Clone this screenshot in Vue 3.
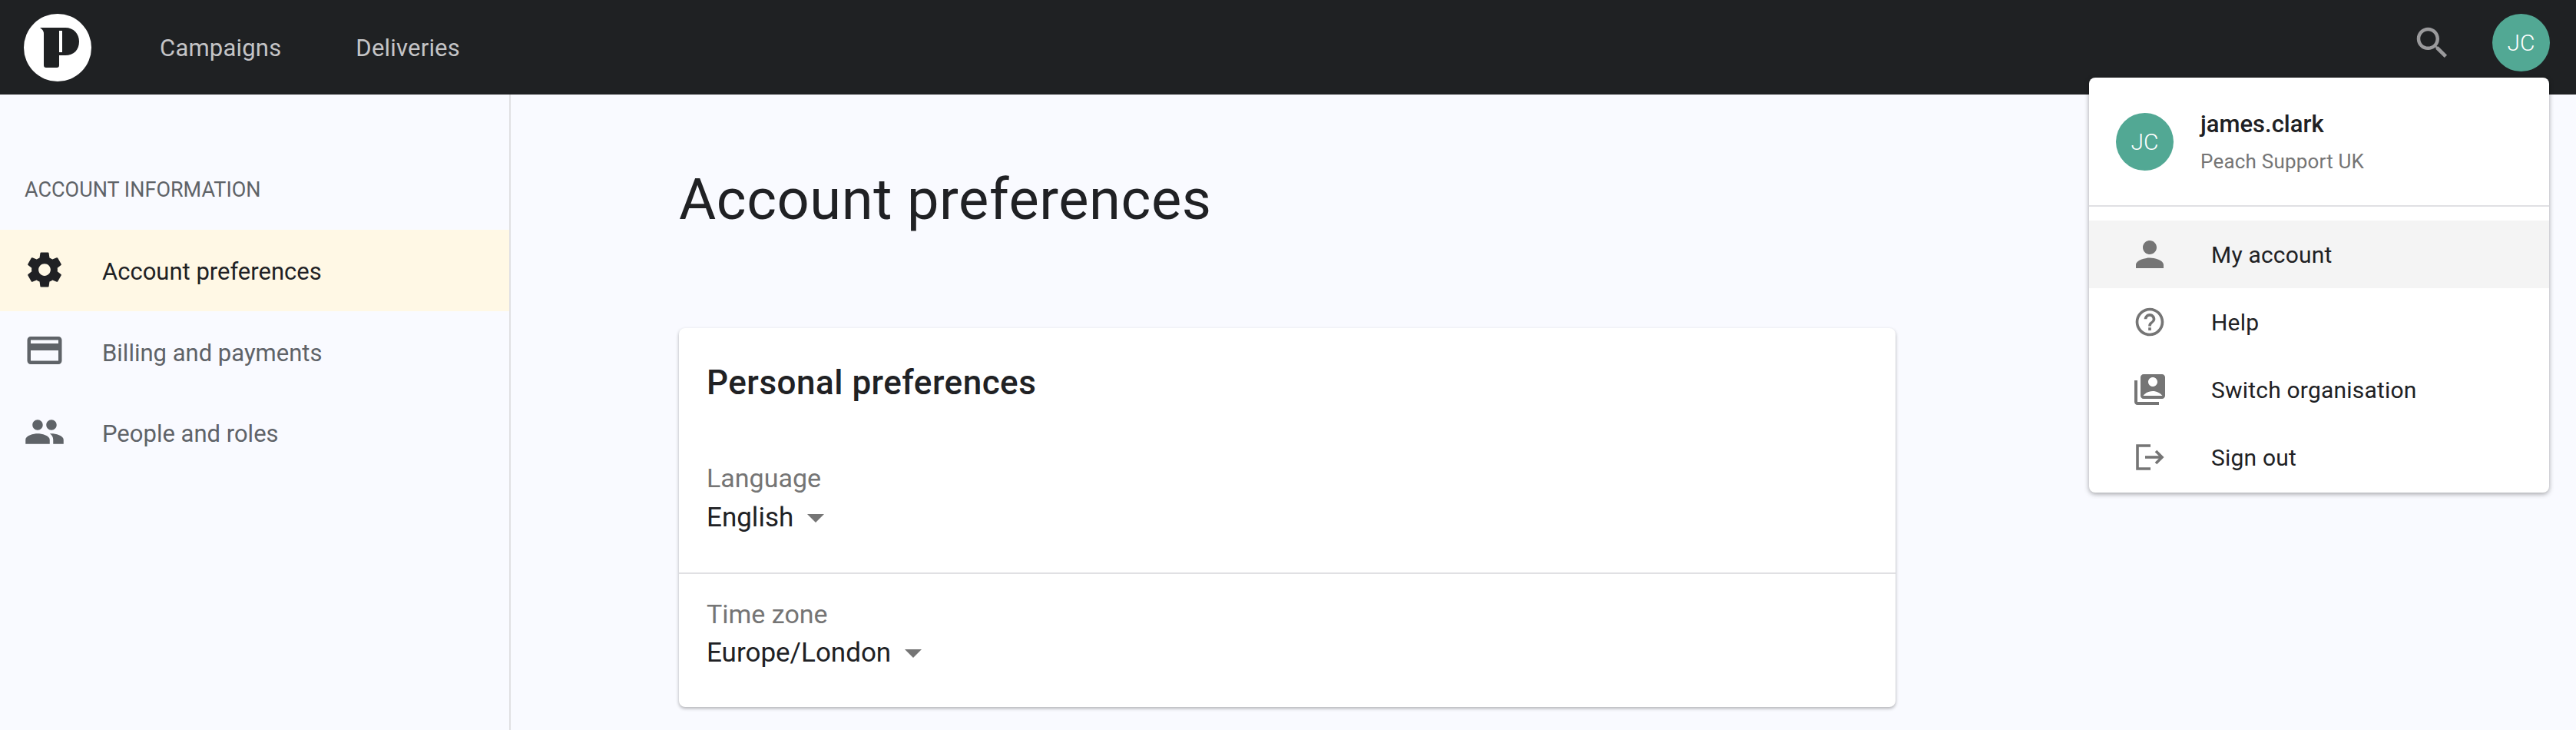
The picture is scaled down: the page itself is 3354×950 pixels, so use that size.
<script setup>
const nav = ['Campaigns', 'Deliveries']
const side = [
  { label: 'Account preferences', active: true, d: 'M19.43 12.98c.04-.32.07-.64.07-.98s-.03-.66-.07-.98l2.11-1.65c.19-.15.24-.42.12-.64l-2-3.46c-.12-.22-.39-.3-.61-.22l-2.49 1c-.52-.4-1.08-.73-1.69-.98l-.38-2.65C14.46 2.18 14.25 2 14 2h-4c-.25 0-.46.18-.49.42l-.38 2.65c-.61.25-1.17.59-1.69.98l-2.49-1c-.23-.09-.49 0-.61.22l-2 3.46c-.13.22-.07.49.12.64l2.11 1.65c-.04.32-.07.65-.07.98s.03.66.07.98l-2.11 1.65c-.19.15-.24.42-.12.64l2 3.46c.12.22.39.3.61.22l2.49-1c.52.4 1.08.73 1.69.98l.38 2.65c.03.24.24.42.49.42h4c.25 0 .46-.18.49-.42l.38-2.65c.61-.25 1.17-.59 1.69-.98l2.49 1c.23.09.49 0 .61-.22l2-3.46c.12-.22.07-.49-.12-.64l-2.11-1.65zM12 15.5c-1.93 0-3.5-1.57-3.5-3.5s1.57-3.5 3.5-3.5 3.5 1.57 3.5 3.5-1.57 3.5-3.5 3.5z' },
  { label: 'Billing and payments', d: 'M20 4H4c-1.11 0-1.99.89-1.99 2L2 18c0 1.11.89 2 2 2h16c1.11 0 2-.89 2-2V6c0-1.11-.89-2-2-2zm0 14H4v-6h16v6zm0-10H4V6h16v2z' },
  { label: 'People and roles', d: 'M16 11c1.66 0 2.99-1.34 2.99-3S17.66 5 16 5c-1.66 0-3 1.34-3 3s1.34 3 3 3zm-8 0c1.66 0 2.99-1.34 2.99-3S9.66 5 8 5C6.34 5 5 6.34 5 8s1.34 3 3 3zm0 2c-2.33 0-7 1.17-7 3.5V19h14v-2.5c0-2.33-4.67-3.5-7-3.5zm8 0c-.29 0-.62.02-.97.05 1.16.84 1.97 1.97 1.97 3.45V19h6v-2.5c0-2.33-4.67-3.5-7-3.5z' }
]
const fields = [
  { label: 'Language', value: 'English' },
  { label: 'Time zone', value: 'Europe/London' }
]
const menu = [
  { label: 'My account', hover: true, size: 54, d: 'M12 12c2.21 0 4-1.79 4-4s-1.79-4-4-4-4 1.79-4 4 1.79 4 4 4zm0 2c-2.67 0-8 1.34-8 4v2h16v-2c0-2.66-5.33-4-8-4z' },
  { label: 'Help', size: 44, d: 'M11 18h2v-2h-2v2zm1-16C6.48 2 2 6.48 2 12s4.48 10 10 10 10-4.48 10-10S17.52 2 12 2zm0 18c-4.41 0-8-3.59-8-8s3.59-8 8-8 8 3.59 8 8-3.59 8-8 8zm0-14c-2.21 0-4 1.79-4 4h2c0-1.1.9-2 2-2s2 .9 2 2c0 2-3 1.75-3 5h2c0-2.25 3-2.5 3-5 0-2.21-1.79-4-4-4z' },
  { label: 'Switch organisation', size: 48, d: 'M4 6H2v14c0 1.1.9 2 2 2h14v-2H4V6zm16-4H8c-1.1 0-2 .9-2 2v12c0 1.1.9 2 2 2h12c1.1 0 2-.9 2-2V4c0-1.1-.9-2-2-2zm-6 2c1.66 0 3 1.34 3 3s-1.34 3-3 3-3-1.34-3-3 1.34-3 3-3zM7.76 16c1.47-1.83 3.71-3 6.24-3s4.77 1.17 6.24 3H7.76z' },
  { label: 'Sign out', signout: true }
]
</script>

<template>
  <div class="page">
    <header class="topbar">
      <svg class="logo" viewBox="0 0 88 88" aria-label="Peach logo">
        <circle cx="44" cy="44" r="44" fill="#fff" />
        <path d="M21 18H54C65 18 72 26 72 36C72 47 65 54 54 54H46V67Q46 70 43 70H29Q26 70 26 67V26Q26 21 21 18Z" fill="#1f2123" />
        <rect x="46" y="22" width="4" height="28" fill="#fff" />
      </svg>
      <nav class="nav">
        <a v-for="n in nav" :key="n" class="nav-link">{{ n }}</a>
      </nav>
      <svg class="search" viewBox="0 0 24 24">
        <path fill="#9a9a9c" d="M15.5 14h-.79l-.28-.27C15.41 12.59 16 11.11 16 9.5 16 5.91 13.09 3 9.5 3S3 5.91 3 9.5 5.91 16 9.5 16c1.61 0 3.09-.59 4.23-1.57l.27.28v.79l5 4.99L20.49 19l-4.99-5zm-6 0C7.01 14 5 11.99 5 9.5S7.01 5 9.5 5 14 7.01 14 9.5 11.99 14 9.5 14z" />
      </svg>
      <div class="avatar">JC</div>
    </header>

    <div class="body">
      <aside class="sidebar">
        <h2 class="side-title">ACCOUNT INFORMATION</h2>
        <div v-for="s in side" :key="s.label" class="side-row" :class="{ active: s.active }">
          <svg class="side-icon" viewBox="0 0 24 24"><path :d="s.d" fill="currentColor" /></svg>
          <span class="side-text">{{ s.label }}</span>
        </div>
      </aside>
      <main class="main">
        <h1 class="title">Account preferences</h1>
        <section class="card">
          <h3 class="card-title">Personal preferences</h3>
          <div v-for="f in fields" :key="f.label" class="field">
            <div class="field-label">{{ f.label }}</div>
            <div class="field-value">{{ f.value }}<i class="caret"></i></div>
          </div>
        </section>
      </main>
    </div>

    <div class="menu">
      <div class="menu-head">
        <div class="avatar">JC</div>
        <div class="who">
          <div class="who-name">james.clark</div>
          <div class="who-org">Peach Support UK</div>
        </div>
      </div>
      <div class="menu-list">
        <div v-for="m in menu" :key="m.label" class="menu-row" :class="{ hover: m.hover }">
          <span class="menu-icon">
            <svg v-if="m.signout" width="37" height="34" viewBox="0 0 37 34" fill="none" stroke="#757575" stroke-width="3.6">
              <path d="M19 2H2V32H19" />
              <path d="M12 17H33" />
              <path d="M26 9L34 17L26 25" />
            </svg>
            <svg v-else :width="m.size" :height="m.size" viewBox="0 0 24 24"><path :d="m.d" fill="#757575" /></svg>
          </span>
          <span>{{ m.label }}</span>
        </div>
      </div>
    </div>
  </div>
</template>

<style>
html, body { margin: 0; background: #f9faff; }
</style>

<style scoped>
.page {
  position: relative;
  height: 950px;
  overflow: hidden;
  display: flex;
  flex-direction: column;
  background: #f9faff;
  font-family: Roboto, "Noto Sans", sans-serif;
  color: #202124;
}
.topbar {
  flex: none;
  height: 123px;
  box-sizing: border-box;
  padding: 18px 34px 0 31px;
  display: flex;
  align-items: flex-start;
  background: #1f2123;
}
.logo { width: 88px; height: 88px; flex: none; }
.nav { display: flex; gap: 97px; margin-left: 89px; height: 88px; align-items: center; }
.nav-link { font-size: 31px; letter-spacing: 0.2px; color: #c4c4c6; }
.search { width: 54px; height: 54px; margin: 11px 0 0 auto; }
.avatar {
  width: 75px;
  height: 75px;
  flex: none;
  border-radius: 50%;
  background: #52a894;
  color: #fff;
  font-size: 30px;
  font-weight: 300;
  display: flex;
  align-items: center;
  justify-content: center;
}
.topbar .avatar { margin-left: 51px; }
.body { flex: 1; display: flex; min-height: 0; }
.sidebar {
  width: 665px;
  flex: none;
  box-sizing: border-box;
  padding-top: 100px;
  border-right: 2px solid #e0e0e3;
}
.side-title {
  margin: 0 0 28px;
  padding-left: 32px;
  font-size: 27px;
  font-weight: 400;
  line-height: 48px;
  color: #5f6368;
}
.side-row {
  height: 105.6px;
  display: flex;
  align-items: center;
  color: #5f6368;
  font-size: 31px;
}
.side-row.active { background: #fff8e5; color: #202124; }
.side-text { margin-top: 4px; }
.side-icon { width: 54px; height: 54px; margin-left: 31px; margin-right: 48px; flex: none; position: relative; top: -1px; }
.main { flex: 1; padding: 97px 0 0 219px; }
.title {
  margin: 0 0 127px;
  font-size: 74px;
  font-weight: 400;
  letter-spacing: 0.6px;
  line-height: 80px;
  color: #202124;
}
.card {
  width: 1584px;
  box-sizing: border-box;
  background: #fff;
  border-radius: 8px;
  box-shadow: 0 2px 4px rgba(0, 0, 0, 0.3);
  padding-top: 46px;
}
.card-title {
  margin: 0 0 48px;
  padding-left: 36px;
  font-size: 44px;
  font-weight: 500;
  letter-spacing: 0.5px;
  line-height: 50px;
}
.field { padding: 25px 36px 47px; }
.field:first-of-type .field-label { line-height: 52px; }
.field:first-of-type { padding-bottom: 45px; }
.field + .field { border-top: 2px solid #e0e0e3; padding-top: 27px; padding-bottom: 44px; }
.field-label { font-size: 34px; line-height: 50px; color: #757575; }
.field-value { font-size: 35px; line-height: 52px; display: flex; align-items: center; }
.caret {
  margin-left: 18px;
  width: 0;
  height: 0;
  border-left: 11px solid transparent;
  border-right: 11px solid transparent;
  border-top: 11px solid #757575;
}
.menu {
  position: absolute;
  top: 101px;
  right: 35px;
  width: 599px;
  background: #fff;
  border-radius: 8px;
  box-shadow: 0 2px 6px rgba(0, 0, 0, 0.35);
  padding-bottom: 2px;
}
.menu-head {
  box-sizing: border-box;
  padding: 46px 0 0 35px;
  display: flex;
  gap: 35px;
  border-bottom: 2px solid #e0e0e3;
  height: 168px;
}
.who-name { font-size: 31px; font-weight: 500; line-height: 40px; margin-top: -5px; }
.who-org { font-size: 26px; letter-spacing: 0.2px; line-height: 40px; margin-top: 8px; color: #757575; }
.menu-list { padding-top: 18px; }
.menu-row {
  height: 88px;
  display: flex;
  align-items: center;
  font-size: 30px;
  letter-spacing: 0.2px;
}
.menu-row.hover { background: #f4f4f4; }
.menu-icon { width: 159px; flex: none; display: flex; justify-content: center; padding-right: 1px; box-sizing: border-box; }
</style>
